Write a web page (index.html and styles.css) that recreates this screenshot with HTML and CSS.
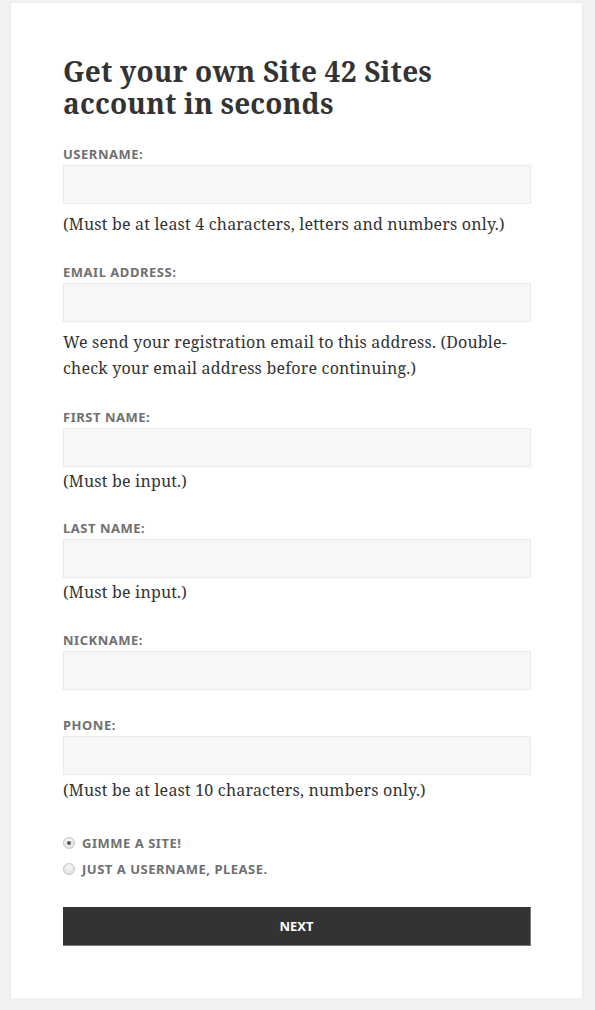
FILE: index.html
```html
<!DOCTYPE html>
<html lang="en">
<head>
<meta charset="utf-8">
<title>Signup</title>
<link rel="stylesheet" href="styles.css">
</head>
<body>
<main class="card">
  <h1 class="title">Get your own Site 42 Sites account in seconds</h1>
  <form class="form">
    <div class="field field-user">
      <label class="label">Username:</label>
      <div class="input"></div>
      <p class="help help-gap">(Must be at least 4 characters, letters and numbers only.)</p>
    </div>
    <div class="field field-email">
      <label class="label">Email&nbsp;Address:</label>
      <div class="input"></div>
      <p class="help help-gap">We send your registration email to this address. (Double-check your email address before continuing.)</p>
    </div>
    <div class="field">
      <label class="label">First Name:</label>
      <div class="input"></div>
      <p class="help">(Must be input.)</p>
    </div>
    <div class="field field-wide">
      <label class="label">Last Name:</label>
      <div class="input"></div>
      <p class="help">(Must be input.)</p>
    </div>
    <div class="field field-wide">
      <label class="label">Nickname:</label>
      <div class="input"></div>
    </div>
    <div class="field field-phone">
      <label class="label">Phone:</label>
      <div class="input"></div>
      <p class="help help-phone">(Must be at least 10 characters, numbers only.)</p>
    </div>
    <div class="radios">
      <div class="radio-row"><span class="radio checked"></span><span class="radio-text">Gimme a site!</span></div>
      <div class="radio-row"><span class="radio"></span><span class="radio-text">Just a username, please.</span></div>
    </div>
    <div class="button">Next</div>
  </form>
</main>
</body>
</html>
```
FILE: styles.css
```css
html, body {
  margin: 0;
  padding: 0;
  background: #f1f1f1;
}
body {
  padding-top: 3px;
  padding-left: 11px;
}
.card {
  width: 571px;
  box-sizing: border-box;
  background: #fff;
  padding: 52px 51px 52px 52px;
  box-shadow: 0 0 1px rgba(0,0,0,0.15);
  color: #333;
}
.title {
  margin: 0;
  font-family: "Noto Serif", "DejaVu Serif", serif;
  font-weight: bold;
  font-size: 28px;
  line-height: 32px;
  letter-spacing: 0.2px;
  color: #333;
}
.form {
  margin-top: 26px;
}
.field {
  display: flex;
  flex-direction: column;
  margin-bottom: 25px;
}
.field-user,
.field-wide {
  margin-bottom: 26px;
}
.field-email,
.field-phone {
  margin-bottom: 27px;
}
.label {
  display: block;
  font-family: "Noto Sans", sans-serif;
  font-weight: bold;
  font-size: 13px;
  line-height: 18px;
  letter-spacing: 0.04em;
  text-transform: uppercase;
  color: #707070;
  margin-bottom: 2px;
}
.input {
  height: 39px;
  box-sizing: border-box;
  background: #f7f7f7;
  border: 1px solid #eaeaea;
}
.help {
  margin: 1px 0 0;
  font-family: "Noto Serif", "DejaVu Serif", serif;
  font-size: 16px;
  line-height: 26px;
  letter-spacing: 0.2px;
  color: #333;
}
.help-gap {
  margin-top: 7px;
}
.help-phone {
  margin-top: 2px;
}
.radios {
  display: flex;
  flex-direction: column;
}
.radio-row {
  display: flex;
  align-items: center;
  gap: 7px;
  height: 26px;
}
.radio {
  width: 12px;
  height: 12px;
  box-sizing: border-box;
  border-radius: 50%;
  border: 1px solid #c4c4c4;
  background: radial-gradient(circle at 50% 35%, #f8f8f8, #dcdcdc);
  display: flex;
  align-items: center;
  justify-content: center;
}
.radio.checked::after {
  content: "";
  width: 4px;
  height: 4px;
  border-radius: 50%;
  background: #555;
}
.radio-text {
  font-family: "Noto Sans", sans-serif;
  font-weight: bold;
  font-size: 13px;
  letter-spacing: 0.04em;
  text-transform: uppercase;
  color: #707070;
}
.button {
  margin-top: 25px;
  height: 39px;
  background: #333;
  border: 1px solid #777;
  border-width: 0 1px 1px 0;
  box-sizing: border-box;
  color: #fff;
  font-family: "Noto Sans", sans-serif;
  font-weight: bold;
  font-size: 13px;
  text-transform: uppercase;
  display: flex;
  align-items: center;
  justify-content: center;
}
```
